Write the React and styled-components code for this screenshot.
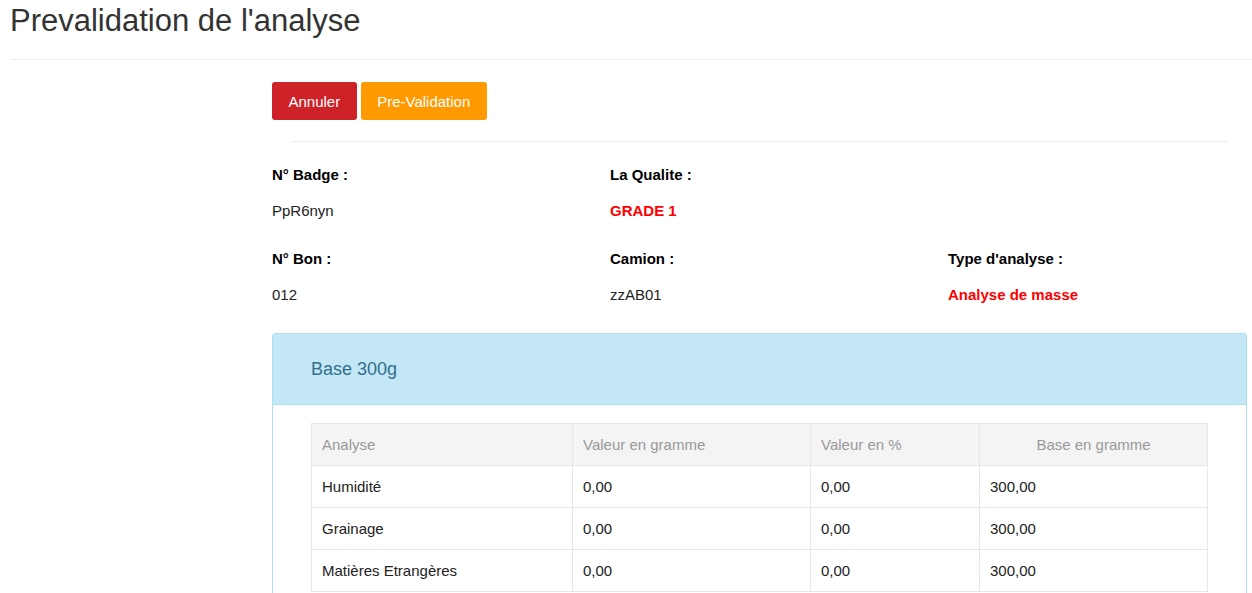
import React from 'react';
import styled, { createGlobalStyle } from 'styled-components';

const GlobalStyle = createGlobalStyle`
  html, body {
    margin: 0;
    padding: 0;
    background: #fff;
  }
  body {
    font-family: 'Liberation Sans', Arial, sans-serif;
    font-size: 15px;
    color: #333;
    overflow: hidden;
  }
`;

const Page = styled.div`
  padding-left: 10px;
`;

const Title = styled.h1`
  margin: 0;
  padding-top: 3px;
  height: 56px;
  font-size: 31px;
  font-weight: 400;
  line-height: 36px;
  color: #333;
`;

const Rule = styled.hr`
  margin: 0;
  border: 0;
  border-top: 1px solid #eee;
`;

const Content = styled.div`
  margin-left: 262px;
  width: 975px;
  padding-top: 22px;
`;

const Actions = styled.div`
  display: flex;
  gap: 4px;
`;

const Button = styled.button`
  height: 38px;
  padding: 0 16.5px;
  border: 0;
  border-radius: 3px;
  font-family: inherit;
  font-size: 15px;
  color: #fff;
  background: ${(p) => (p.$variant === 'danger' ? '#cd2328' : '#ff9900')};
`;

const Divider = styled.hr`
  margin: 21px 19px 0;
  border: 0;
  border-top: 1px solid #eee;
`;

const InfoGrid = styled.div`
  display: grid;
  grid-template-columns: repeat(3, 338px);
  padding-top: 24px;
  row-gap: 31px;
`;

const Field = styled.div`
  display: flex;
  flex-direction: column;
  gap: 19px;
`;

const Label = styled.div`
  font-weight: 700;
  color: #000;
  line-height: 17px;
`;

const Value = styled.div`
  line-height: 17px;
  color: ${(p) => (p.$highlight ? '#f00' : '#222')};
  font-weight: ${(p) => (p.$highlight ? 700 : 400)};
`;

const Panel = styled.section`
  margin-top: 30px;
  border: 1px solid #a9e1ee;
  border-radius: 3px;
  height: 400px;
`;

const PanelHeading = styled.div`
  height: 70px;
  display: flex;
  align-items: center;
  padding-left: 38px;
  background: #c4e7f5;
  border-bottom: 1px solid #a9e1ee;
  font-size: 18px;
  color: #31708f;
`;

const PanelBody = styled.div`
  padding: 18px 38px 0;
`;

const Table = styled.table`
  width: 896px;
  border-collapse: collapse;
  table-layout: fixed;
`;

const Th = styled.th`
  height: 41px;
  padding: 0 10px;
  background: #f4f4f4;
  border: 1px solid #e8e8e8;
  font-weight: 400;
  color: #999;
  text-align: ${(p) => (p.$center ? 'center' : 'left')};
`;

const Td = styled.td`
  height: 41px;
  padding: 0 10px;
  border: 1px solid #e8e8e8;
  color: #222;
`;

const info = [
  { label: 'N° Badge :', value: 'PpR6nyn' },
  { label: 'La Qualite :', value: 'GRADE 1', highlight: true },
  null,
  { label: 'N° Bon :', value: '012' },
  { label: 'Camion :', value: 'zzAB01' },
  { label: "Type d'analyse :", value: 'Analyse de masse', highlight: true },
];

const rows = [
  ['Humidité', '0,00', '0,00', '300,00'],
  ['Grainage', '0,00', '0,00', '300,00'],
  ['Matières Etrangères', '0,00', '0,00', '300,00'],
];

const App = () => (
  <Page>
    <GlobalStyle />
    <Title>Prevalidation de l'analyse</Title>
    <Rule />
    <Content>
      <Actions>
        <Button $variant="danger">Annuler</Button>
        <Button $variant="warning">Pre-Validation</Button>
      </Actions>
      <Divider />
      <InfoGrid>
        {info.map((item, i) =>
          item ? (
            <Field key={i}>
              <Label>{item.label}</Label>
              <Value $highlight={item.highlight}>{item.value}</Value>
            </Field>
          ) : (
            <div key={i} />
          )
        )}
      </InfoGrid>
      <Panel>
        <PanelHeading>Base 300g</PanelHeading>
        <PanelBody>
          <Table>
            <colgroup>
              <col style={{ width: 261 }} />
              <col style={{ width: 238 }} />
              <col style={{ width: 169 }} />
              <col style={{ width: 228 }} />
            </colgroup>
            <thead>
              <tr>
                <Th>Analyse</Th>
                <Th>Valeur en gramme</Th>
                <Th>Valeur en %</Th>
                <Th $center>Base en gramme</Th>
              </tr>
            </thead>
            <tbody>
              {rows.map((r) => (
                <tr key={r[0]}>
                  {r.map((c, j) => (
                    <Td key={j}>{c}</Td>
                  ))}
                </tr>
              ))}
            </tbody>
          </Table>
        </PanelBody>
      </Panel>
    </Content>
  </Page>
);

export default App;
